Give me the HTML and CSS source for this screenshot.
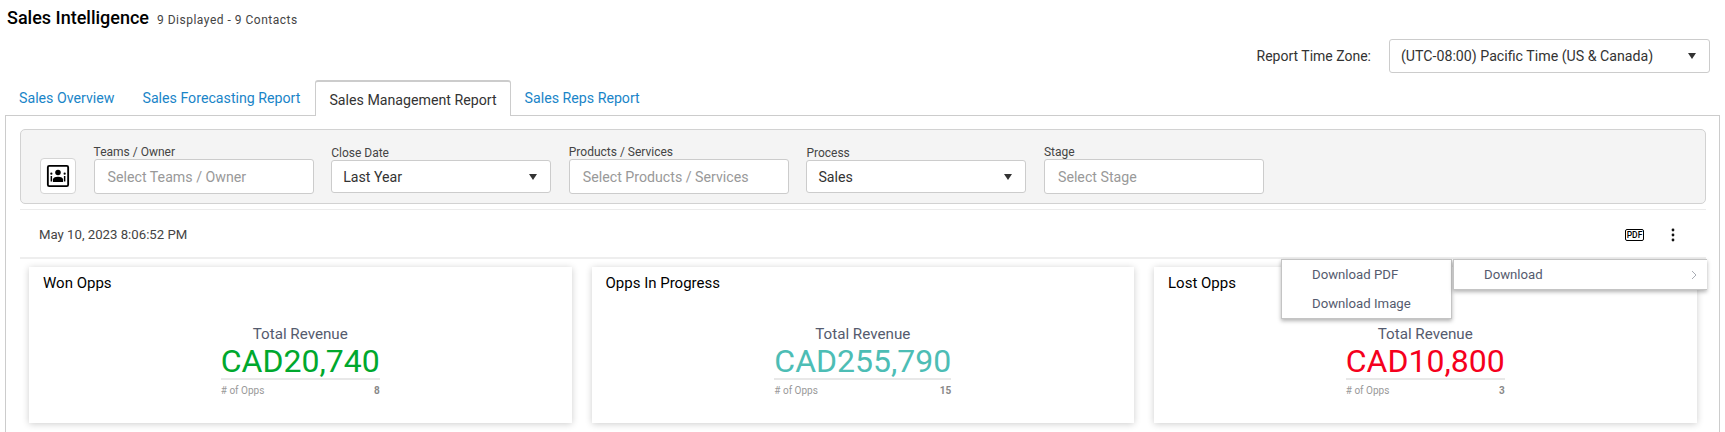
FILE: index.html
```html
<!DOCTYPE html>
<html lang="en">
  <head>
    <meta charset="utf-8" />
    <title>Sales Intelligence</title>
    <link rel="stylesheet" href="styles.css">
  </head>
  <body>
    <header class="page-head">
      <h1>Sales Intelligence</h1>
      <small>9 Displayed - 9 Contacts</small>
    </header>

    <div class="zone-row">
      <label>Report Time Zone:</label>
      <div class="pick zone-pick"><span>(UTC-08:00) Pacific Time (US &amp; Canada)</span><i class="caret"></i></div>
    </div>

    <nav class="tabs">
      <a href="#">Sales Overview</a>
      <a href="#">Sales Forecasting Report</a>
      <a href="#" class="active">Sales Management Report</a>
      <a href="#">Sales Reps Report</a>
    </nav>

    <main class="panel">
      <section class="filters">
        <button class="view-btn" aria-label="Team view">
          <svg width="24" height="24" viewBox="0 0 26 26">
            <rect x="2" y="2" width="22" height="22" rx="1.5" fill="none" stroke="#000" stroke-width="2"/>
            <circle cx="13" cy="9.300" r="3" fill="#000"/>
            <path d="M7.500 19.500v-2.600c0-2 2-3.200 5.500-3.200s5.500 1.200 5.500 3.200v2.600z" fill="#000"/>
            <circle cx="5.800" cy="10.500" r="1.200" fill="#000"/>
            <circle cx="20.200" cy="10.500" r="1.200" fill="#000"/>
            <path d="M5 13h1.600v6H5zM19.400 13H21v6h-1.600z" fill="#000"/>
          </svg>
        </button>
        <div class="field">
          <label>Teams / Owner</label>
          <div class="pick blank">Select Teams / Owner</div>
        </div>
        <div class="field low">
          <label>Close Date</label>
          <div class="pick"><span>Last Year</span><i class="caret"></i></div>
        </div>
        <div class="field">
          <label>Products / Services</label>
          <div class="pick blank">Select Products / Services</div>
        </div>
        <div class="field low">
          <label>Process</label>
          <div class="pick"><span>Sales</span><i class="caret"></i></div>
        </div>
        <div class="field">
          <label>Stage</label>
          <div class="pick blank">Select Stage</div>
        </div>
      </section>

      <div class="stamp-row">
        <span>May 10, 2023 8:06:52 PM</span>
        <div class="stamp-tools">
          <span class="pdf-icon">PDF</span>
          <svg class="kebab" width="4" height="14" viewBox="0 0 4 14">
            <circle cx="2" cy="2" r="1.400"/>
            <circle cx="2" cy="7" r="1.400"/>
            <circle cx="2" cy="12" r="1.400"/>
          </svg>
        </div>
      </div>

      <section class="cards">
        <article class="card">
          <h3>Won Opps</h3>
          <div class="stat">
            <p class="stat-label">Total Revenue</p>
            <p class="stat-value won">CAD20,740</p>
            <p class="stat-foot"><span># of Opps</span><b>8</b></p>
          </div>
        </article>
        <article class="card">
          <h3>Opps In Progress</h3>
          <div class="stat">
            <p class="stat-label">Total Revenue</p>
            <p class="stat-value open">CAD255,790</p>
            <p class="stat-foot"><span># of Opps</span><b>15</b></p>
          </div>
        </article>
        <article class="card">
          <h3>Lost Opps</h3>
          <div class="stat">
            <p class="stat-label">Total Revenue</p>
            <p class="stat-value lost">CAD10,800</p>
            <p class="stat-foot"><span># of Opps</span><b>3</b></p>
          </div>
        </article>
      </section>

      <ul class="menu sub-menu">
        <li>Download PDF</li>
        <li>Download Image</li>
      </ul>
      <ul class="menu main-menu">
        <li>Download<svg width="6" height="10" viewBox="0 0 6 10"><path d="M1 1l4 4-4 4" fill="none" stroke="#a9adb5" stroke-width="1"/></svg></li>
      </ul>
    </main>
  </body>
</html>
```

FILE: styles.css
```css
* {
  box-sizing: border-box;
}
html,
body {
  height: 432px;
  overflow: hidden;
}
body {
  margin: 0;
  background: #fff;
  color: #333;
  font-family: Roboto, sans-serif;
  font-size: 13px;
}

/* page head */
.page-head {
  display: flex;
  align-items: baseline;
  gap: 8px;
  height: 39px;
  padding: 7px 0 0 7px;
}
.page-head h1 {
  margin: 0;
  color: #000;
  font-size: 18px;
  font-weight: 500;
}
.page-head small {
  color: #444;
  font-size: 12px;
  font-weight: 400;
  letter-spacing: 0.5px;
}
.zone-row {
  display: flex;
  justify-content: flex-end;
  align-items: center;
  gap: 18px;
  height: 34px;
  padding-right: 15px;
  font-size: 14px;
}
.zone-pick {
  width: 321px;
  height: 34px;
}

/* shared select box */
.pick {
  display: flex;
  align-items: center;
  justify-content: space-between;
  padding: 0 13px 0 11px;
  background: #fff;
  border: 1px solid #ccc;
  border-radius: 3px;
  color: #333;
  font-size: 14.200px;
}
.pick.blank {
  padding-left: 13px;
  color: #999;
}
.caret {
  width: 0;
  height: 0;
  border-left: 4px solid transparent;
  border-right: 4px solid transparent;
  border-top: 6px solid #333;
}

/* tabs */
.tabs {
  display: flex;
  align-items: flex-end;
  height: 43px;
  margin: 0 5px -1px;
  font-size: 14.200px;
}
.tabs a {
  height: 36px;
  padding: 10px 14px 0;
  color: #1a85c8;
  text-decoration: none;
}
.tabs a.active {
  position: relative;
  z-index: 1;
  margin-left: 1px;
  padding: 10px 13px 0;
  background: #fff;
  border: 1px solid #ccc;
  border-top: 2px solid #ccc;
  border-bottom: 0;
  border-radius: 3px 3px 0 0;
  color: #333;
}

/* main panel */
.panel {
  position: relative;
  height: 320px;
  margin: 0 5px;
  padding: 13px 13px 0 14px;
  border: 1px solid #ccc;
  border-bottom: 0;
}
.filters {
  display: flex;
  align-items: flex-end;
  gap: 17.600px;
  height: 75px;
  padding: 0 0 9px 19px;
  background: #f4f4f4;
  border: 1px solid #d2d2d2;
  border-radius: 5px;
}
.view-btn {
  display: flex;
  align-items: center;
  justify-content: center;
  width: 36px;
  height: 36px;
  padding: 0;
  background: #fff;
  border: 1px solid #d5d5d5;
  border-radius: 4px;
}
.field {
  width: 220px;
}
.field label {
  display: block;
  color: #444;
  font-size: 12px;
  line-height: 14px;
}
.field .pick {
  height: 35px;
}
.field.low .pick {
  height: 33px;
  margin-bottom: 1px;
}
.stamp-row {
  display: flex;
  align-items: center;
  justify-content: space-between;
  height: 50px;
  margin-top: 5px;
  padding: 2px 31px 0 19px;
  border-top: 1px solid #ececec;
  border-bottom: 2px solid #eee;
  color: #444;
  font-size: 13.200px;
}
.stamp-tools {
  display: flex;
  align-items: center;
  gap: 27px;
}
.pdf-icon {
  width: 19px;
  height: 12px;
  border: 1px solid #000;
  border-radius: 2px;
  color: #000;
  font-size: 8.500px;
  font-weight: 500;
  line-height: 10px;
  text-align: center;
}
.kebab {
  fill: #111;
}

/* cards */
.cards {
  display: grid;
  grid-template-columns: repeat(3, 542.500px);
  gap: 20px;
  margin: 8px 0 0 9px;
}
.card {
  height: 156px;
  padding: 7px 14px;
  background: #fff;
  box-shadow: 0 1px 7px rgba(0, 0, 0, 0.2);
}
.card h3 {
  margin: 0;
  color: #000;
  font-size: 15px;
  font-weight: 400;
  line-height: 18px;
}
.stat {
  width: fit-content;
  margin: 34px auto 0;
  text-align: center;
}
.stat p {
  margin: 0;
}
.stat .stat-label {
  color: #555b6e;
  font-size: 15.200px;
  line-height: 16px;
}
.stat .stat-value {
  margin-top: 3px;
  font-size: 32px;
  line-height: 32px;
  white-space: nowrap;
}
.won {
  color: #00a82d;
}
.open {
  color: #4dbdb5;
}
.lost {
  color: #f5001d;
}
.stat .stat-foot {
  display: flex;
  justify-content: space-between;
  margin-top: 1px;
  padding-top: 5px;
  border-top: 2px solid #e8e8e8;
  color: #999;
  font-size: 10px;
}
.stat-foot b {
  color: #888;
}

/* download menu */
.menu {
  position: absolute;
  top: 143px;
  margin: 0;
  padding: 0;
  list-style: none;
  background: #fff;
  border: 1px solid #c4c4c4;
  box-shadow: 0 2px 4px rgba(0, 0, 0, 0.3);
  color: #555b6e;
  font-size: 13.200px;
}
.menu li {
  display: flex;
  align-items: center;
  justify-content: space-between;
  height: 29px;
}
.sub-menu {
  left: 1275px;
  width: 171px;
}
.sub-menu li {
  padding-left: 30px;
}
.main-menu {
  left: 1447px;
  width: 254px;
  border-right: 0;
}
.main-menu li {
  padding: 0 10px 0 30px;
}
```
